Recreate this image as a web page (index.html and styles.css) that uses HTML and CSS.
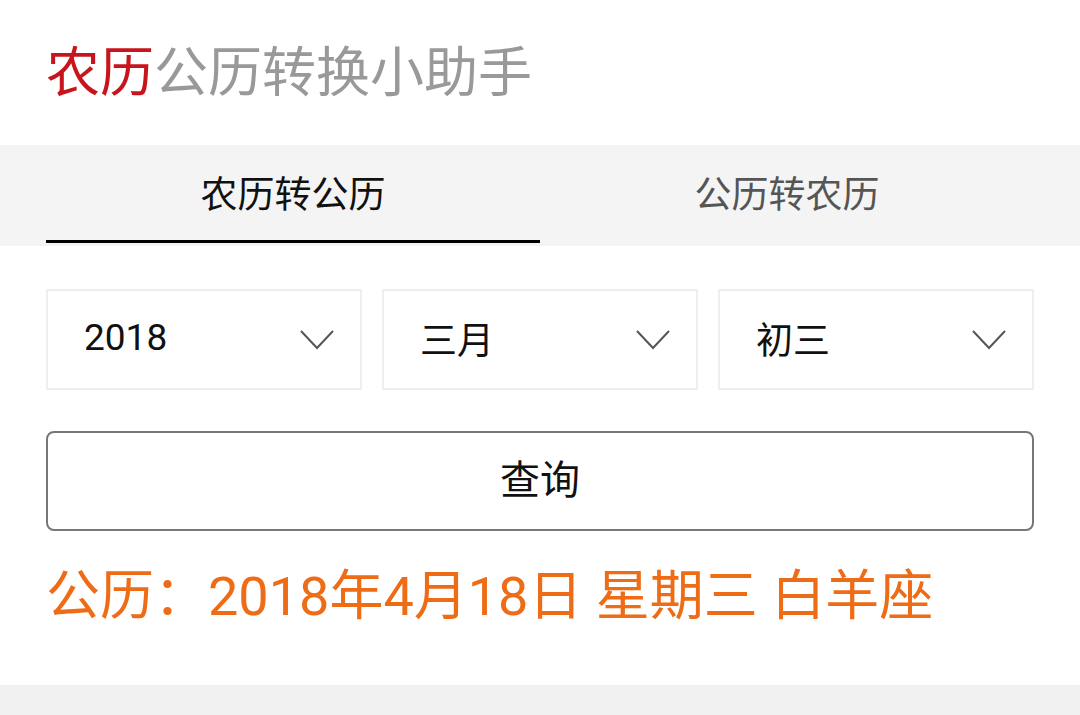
FILE: index.html
```html
<!DOCTYPE html>
<html lang="zh-CN">
<head>
    <meta charset="UTF-8">
    <meta name="viewport" content="width=device-width, initial-scale=1.0">
    <title>农历公历转换小助手</title>
    <link rel="stylesheet" href="styles.css">
</head>
<body>

    <!-- 标题 -->
    <header class="page-title">
        <span class="title-red">农历</span>公历转换小助手
    </header>

    <!-- 切换标签 -->
    <nav class="tab-bar">
        <div class="tab active">农历转公历</div>
        <div class="tab">公历转农历</div>
    </nav>

    <!-- 选择区 -->
    <div class="form">
        <div class="selects">
            <div class="select-box">
                <span>2018</span>
                <svg class="chevron" width="34" height="20" viewBox="0 0 34 20"><polyline points="1,1 17,18 33,1" fill="none" stroke="#555" stroke-width="2"/></svg>
            </div>
            <div class="select-box">
                <span>三月</span>
                <svg class="chevron" width="34" height="20" viewBox="0 0 34 20"><polyline points="1,1 17,18 33,1" fill="none" stroke="#555" stroke-width="2"/></svg>
            </div>
            <div class="select-box">
                <span>初三</span>
                <svg class="chevron" width="34" height="20" viewBox="0 0 34 20"><polyline points="1,1 17,18 33,1" fill="none" stroke="#555" stroke-width="2"/></svg>
            </div>
        </div>

        <button type="button" class="query-btn">查询</button>

        <p class="result">公历：2018年4月18日 星期三 白羊座</p>
    </div>

    <div class="footer-strip"></div>

</body>
</html>
```

FILE: styles.css
```css
body {
    font-family: Roboto, "Noto Sans CJK SC", sans-serif;
    background-color: #fff;
    margin: 0;
    padding: 0;
    width: 1080px;
    height: 715px;
    overflow: hidden;
    display: flex;
    flex-direction: column;
}

.page-title {
    height: 145px;
    display: flex;
    align-items: center;
    padding-left: 46px;
    padding-bottom: 8px;
    box-sizing: border-box;
    font-size: 54px;
    color: #999;
}

.title-red {
    color: #c8141c;
}

.tab-bar {
    background-color: #f4f4f4;
    display: flex;
    padding: 0 46px 3px;
}

.tab {
    flex: 1;
    height: 98px;
    display: flex;
    align-items: center;
    justify-content: center;
    font-size: 37px;
    color: #555;
    box-sizing: border-box;
    padding-bottom: 4px;
}

.tab.active {
    color: #111;
    border-bottom: 3px solid #000;
    padding-bottom: 1px;
}

.form {
    flex: 1;
    padding: 43px 46px 0;
}

.selects {
    display: flex;
    gap: 20px;
}

.select-box {
    flex: 1;
    height: 101px;
    border: 2px solid #eee;
    box-sizing: border-box;
    display: flex;
    align-items: center;
    justify-content: space-between;
    padding: 0 26px 0 36px;
    font-size: 37px;
    color: #111;
}

.select-box span {
    margin-bottom: 4px;
}

.query-btn {
    display: block;
    width: 100%;
    height: 100px;
    margin-top: 41px;
    background: #fff;
    border: 2px solid #777;
    border-radius: 8px;
    font-family: inherit;
    font-size: 40px;
    color: #111;
    padding: 0 0 8px;
}

.result {
    margin: 34px 0 0 0;
    font-size: 54px;
    line-height: 64px;
    color: #ef6c17;
}

.footer-strip {
    height: 30px;
    background-color: #f0f0f0;
}
```
